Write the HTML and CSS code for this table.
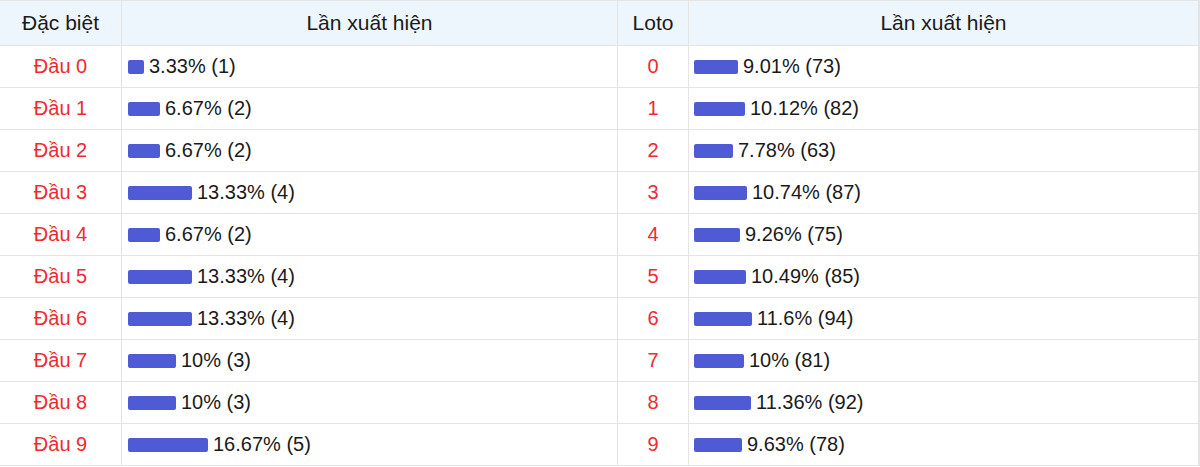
FILE: index.html
```html
<!DOCTYPE html>
<html lang="vi">
<head>
<meta charset="utf-8">
<title>Thống kê</title>
<link rel="stylesheet" href="styles.css">
</head>
<body>
<div class="stats">
  <div class="cell head">Đặc biệt</div>
  <div class="cell head">Lần xuất hiện</div>
  <div class="cell head">Loto</div>
  <div class="cell head last">Lần xuất hiện</div>

  <div class="cell key">Đầu 0</div>
  <div class="cell val left"><span class="bar" style="width:16px"></span><span>3.33% (1)</span></div>
  <div class="cell key">0</div>
  <div class="cell val right last"><span class="bar" style="width:44px"></span><span>9.01% (73)</span></div>

  <div class="cell key">Đầu 1</div>
  <div class="cell val left"><span class="bar" style="width:32px"></span><span>6.67% (2)</span></div>
  <div class="cell key">1</div>
  <div class="cell val right last"><span class="bar" style="width:51px"></span><span>10.12% (82)</span></div>

  <div class="cell key">Đầu 2</div>
  <div class="cell val left"><span class="bar" style="width:32px"></span><span>6.67% (2)</span></div>
  <div class="cell key">2</div>
  <div class="cell val right last"><span class="bar" style="width:39px"></span><span>7.78% (63)</span></div>

  <div class="cell key">Đầu 3</div>
  <div class="cell val left"><span class="bar" style="width:64px"></span><span>13.33% (4)</span></div>
  <div class="cell key">3</div>
  <div class="cell val right last"><span class="bar" style="width:53px"></span><span>10.74% (87)</span></div>

  <div class="cell key">Đầu 4</div>
  <div class="cell val left"><span class="bar" style="width:32px"></span><span>6.67% (2)</span></div>
  <div class="cell key">4</div>
  <div class="cell val right last"><span class="bar" style="width:46px"></span><span>9.26% (75)</span></div>

  <div class="cell key">Đầu 5</div>
  <div class="cell val left"><span class="bar" style="width:64px"></span><span>13.33% (4)</span></div>
  <div class="cell key">5</div>
  <div class="cell val right last"><span class="bar" style="width:52px"></span><span>10.49% (85)</span></div>

  <div class="cell key">Đầu 6</div>
  <div class="cell val left"><span class="bar" style="width:64px"></span><span>13.33% (4)</span></div>
  <div class="cell key">6</div>
  <div class="cell val right last"><span class="bar" style="width:58px"></span><span>11.6% (94)</span></div>

  <div class="cell key">Đầu 7</div>
  <div class="cell val left"><span class="bar" style="width:48px"></span><span>10% (3)</span></div>
  <div class="cell key">7</div>
  <div class="cell val right last"><span class="bar" style="width:50px"></span><span>10% (81)</span></div>

  <div class="cell key">Đầu 8</div>
  <div class="cell val left"><span class="bar" style="width:48px"></span><span>10% (3)</span></div>
  <div class="cell key">8</div>
  <div class="cell val right last"><span class="bar" style="width:57px"></span><span>11.36% (92)</span></div>

  <div class="cell key">Đầu 9</div>
  <div class="cell val left"><span class="bar" style="width:80px"></span><span>16.67% (5)</span></div>
  <div class="cell key">9</div>
  <div class="cell val right last"><span class="bar" style="width:48px"></span><span>9.63% (78)</span></div>
</div>
</body>
</html>
```

FILE: styles.css
```css
html, body {
  margin: 0;
  padding: 0;
  background: #ffffff;
}

body {
  font-family: "Liberation Sans", Arial, sans-serif;
  color: #1a1a1a;
}

.stats {
  display: grid;
  grid-template-columns: 122px 496px 71px 511px;
  grid-template-rows: 45px;
  grid-auto-rows: 42px;
  border-top: 1px solid #e4e4e4;
  width: 1200px;
}

.cell {
  box-sizing: border-box;
  border-right: 1px solid #e4e4e4;
  border-bottom: 1px solid #e4e4e4;
  display: flex;
  align-items: center;
  font-size: 20px;
}

.cell.last {
  border-right: 2px solid #e4e4e4;
}

.head {
  background: #eef6fd;
  justify-content: center;
  font-size: 21px;
  color: #1a1a1a;
}

.key {
  justify-content: center;
  color: #ee2a33;
}

.val {
  gap: 5px;
}

.val.left {
  padding-left: 6px;
}

.val.right {
  padding-left: 5px;
}

.bar {
  display: inline-block;
  height: 14px;
  background: #4f5bd5;
  border-radius: 2px;
  flex: none;
}
```
